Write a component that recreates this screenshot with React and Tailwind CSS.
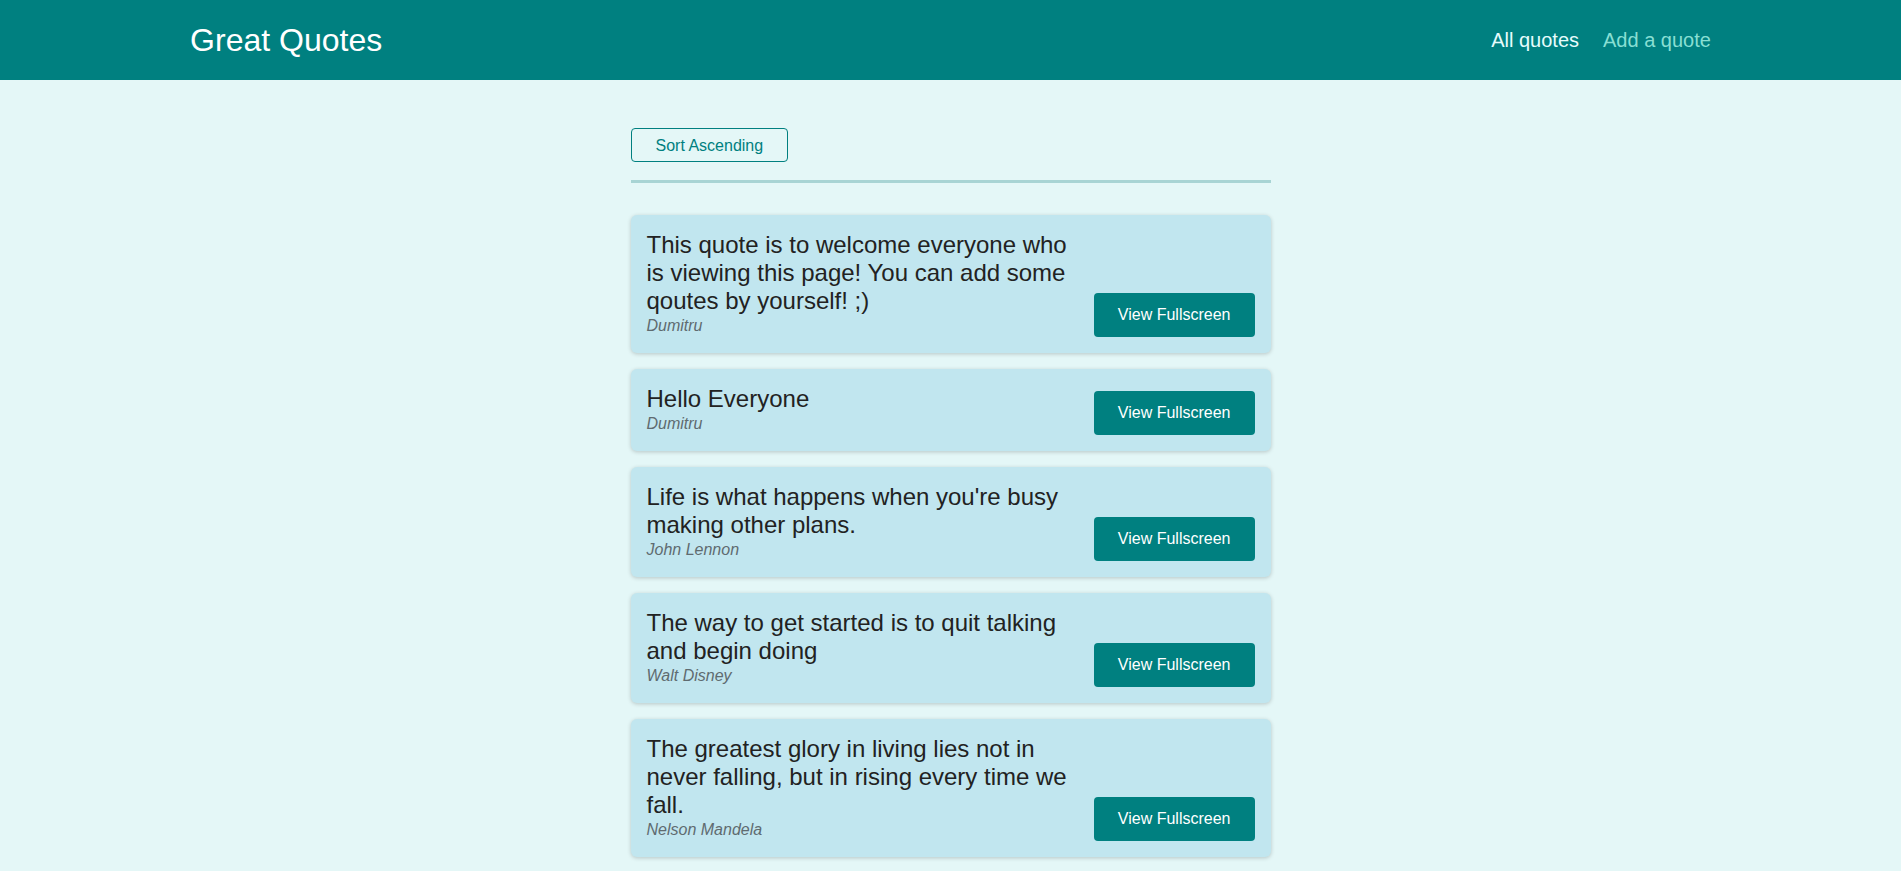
import React, { useState } from 'react';

const QUOTES = [
  { id: 'q1', text: 'This quote is to welcome everyone who is viewing this page! You can add some qoutes by yourself! ;)', author: 'Dumitru' },
  { id: 'q2', text: 'Hello Everyone', author: 'Dumitru' },
  { id: 'q3', text: "Life is what happens when you're busy making other plans.", author: 'John Lennon' },
  { id: 'q4', text: 'The way to get started is to quit talking and begin doing', author: 'Walt Disney' },
  { id: 'q5', text: 'The greatest glory in living lies not in never falling, but in rising every time we fall.', author: 'Nelson Mandela' },
];

function QuoteItem({ quote }) {
  return (
    <li className="flex items-end gap-4 rounded-md bg-[#c1e6ef] p-4 shadow-[0_1px_4px_rgba(0,0,0,0.2)]">
      <figure className="flex-1">
        <blockquote className="text-2xl leading-[28px] text-[#222]">
          <p>{quote.text}</p>
        </blockquote>
        <figcaption className="text-base italic leading-[22px] text-[#5f6b70]">{quote.author}</figcaption>
      </figure>
      <button className="h-11 shrink-0 rounded bg-[#008080] px-6 text-base text-white">
        View Fullscreen
      </button>
    </li>
  );
}

export default function App() {
  const [ascending, setAscending] = useState(true);

  return (
    <div className="min-h-screen bg-[#e4f7f7] font-['Liberation_Sans',Arial,sans-serif]">
      {/* Header */}
      <header className="flex h-20 items-center justify-between bg-[#008080] px-[10%]">
        <div className="text-[32px] text-white">Great Quotes</div>
        <nav>
          <ul className="flex gap-6 text-xl">
            <li><a href="#" className="text-[#e6fcfc]">All quotes</a></li>
            <li><a href="#" className="text-[#88dfd3]">Add a quote</a></li>
          </ul>
        </nav>
      </header>

      {/* Lista */}
      <main className="mx-auto w-[640px] pt-12">
        <div className="border-b-[3px] border-[#a8d4d4] pb-[18px]">
          <button
            onClick={() => setAscending(!ascending)}
            className="h-[34px] rounded border border-[#008080] px-6 pt-px text-base text-[#008080]"
          >
            {ascending ? 'Sort Ascending' : 'Sort Descending'}
          </button>
        </div>
        <ul className="mt-[32px] flex flex-col gap-4 pb-8">
          {QUOTES.map((q) => (
            <QuoteItem key={q.id} quote={q} />
          ))}
        </ul>
      </main>
    </div>
  );
}
